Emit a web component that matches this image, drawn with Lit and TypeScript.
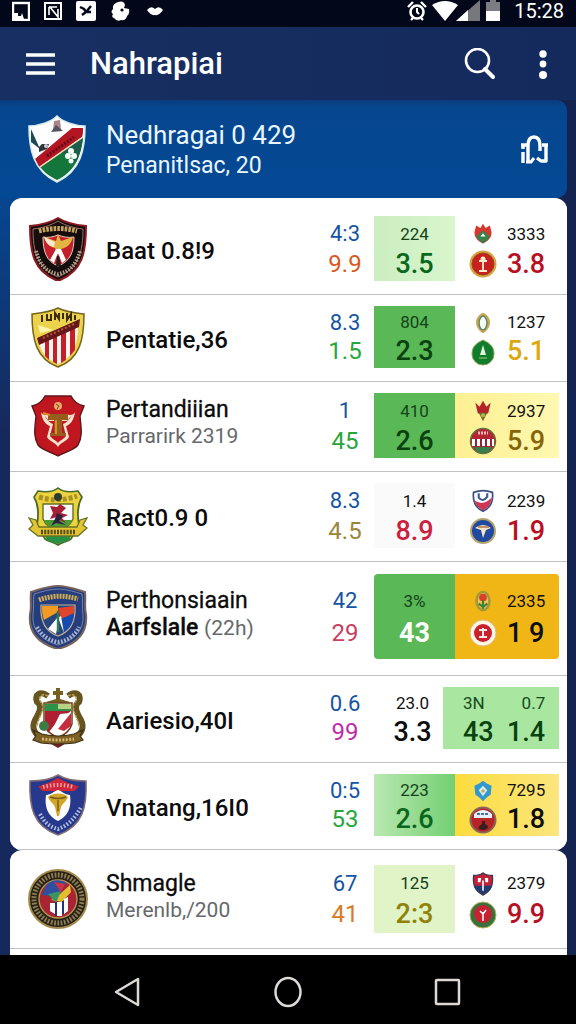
import { LitElement, html, svg, css, nothing, TemplateResult } from "lit";
import { customElement, property } from "lit/decorators.js";
import { classMap } from "lit/directives/class-map.js";

interface Pair {
  top: string;
  bottom: string;
  tone: string;
}

interface Club {
  crest: string;
  name: string;
  second?: string;
  note?: string;
  stacked?: boolean;
  size: "small" | "medium" | "roomy" | "large";
  odds: Pair;
  form: Pair & { fill: string };
  rank: Pair & { fill: string; icons?: [string, string]; wide?: boolean };
}

const crests: Record<string, TemplateResult> = {
  hero: svg`
    <path d="M30 1C24 7 12 11 2 11C2 34 6 56 30 67C54 56 58 34 58 11C48 11 36 7 30 1Z" fill="#fff"/>
    <path d="M4 14L13 34L4 27Z" fill="#1c4a55"/>
    <path d="M45 13L56 13C56 17 56 19 55 22L12 52C10 49 9 47 8 44Z" fill="#b31522"/>
    <path d="M56 23C54 42 47 57 30 65C22 61 17 57 13 52Z" fill="#14763a"/>
    <path d="M56 23C54 34 53 40 49 47L34 37Z" fill="#1e5d4c"/>
    <path d="M13 52L56 22" stroke="#f0dfb8" stroke-width="1.5"/>
    <path d="M20 41L47 22" stroke="#650b17" stroke-width="3" stroke-dasharray="2 1.5"/>
    <path d="M27 6L33 5L34 14L26 15Z" fill="#a9848c"/><path d="M29 10L36 16L24 17Z" fill="#555361"/>
    <path d="M12 32L15 29L22 29L20 34L12 37Z" fill="#2d3535"/><circle cx="19" cy="31" r="2" fill="#ccd"/>
    <g fill="#f4fff7"><circle cx="44" cy="36" r="3"/><circle cx="41" cy="41" r="3"/><circle cx="47" cy="41" r="3"/><circle cx="44" cy="46" r="2.5"/></g>
    <path d="M30 1C24 7 12 11 2 11C2 34 6 56 30 67C54 56 58 34 58 11C48 11 36 7 30 1Z" fill="none" stroke="#d9ebe9" stroke-width="1.6"/>`,
  eagle: svg`
    <path d="M30 1C22 6 12 8 2 9C2 35 5 54 30 64C55 54 58 35 58 9C48 8 38 6 30 1Z" fill="#150c0d" stroke="#8b1b22" stroke-width="2"/>
    <path d="M30 4C22 9 13 11 5 12C5 34 9 51 30 60C51 51 55 34 55 12C47 11 38 9 30 4Z" fill="none" stroke="#c28a79" stroke-width=".8"/>
    <path d="M11 14Q30 9 49 14" fill="none" stroke="#c7a45e" stroke-width="5" stroke-dasharray="2.6 1.1"/>
    <path d="M8 34C12 49 19 55 30 57C41 55 48 49 52 34" fill="none" stroke="#b9a58c" stroke-width="4" stroke-dasharray="1.5 1.5"/>
    <path d="M15 20C20 21 25 20 30 18C35 20 40 21 46 20C46 34 43 44 30 49C18 44 15 34 15 20Z" fill="#c3202b" stroke="#e7cdb6" stroke-width="1"/>
    <path d="M16 20L28 24L30 17L33 24L45 20C43 28 38 31 33 32L30 38L27 31C22 30 18 27 16 20Z" fill="#e2b442"/>
    <path d="M16 20L27 25L26 30C21 29 18 26 16 20Z" fill="#f7e9cf"/>
    <path d="M28 32L22 43L26 46L30 36L34 46L38 43L33 32Z" fill="#fff"/><path d="M29 39L28 49H33L31 39Z" fill="#26191a"/>`,
  stripes: svg`
    <path d="M30 3C23 7 13 8 4 9C4 34 8 54 30 62C52 54 56 34 56 9C47 8 37 7 30 3Z" fill="#ecd34c" stroke="#75631e" stroke-width="1.5"/>
    <path d="M11 37L50 22C50 40 44 53 30 59C18 54 13 47 11 37Z" fill="#fff5ec"/>
    <path d="M17 35L21 33V55L17 51ZM25 32L29 30V59L25 57ZM33 28L38 26V55L33 58ZM42 24L47 22V45L42 51Z" fill="#c51f2c"/>
    <path d="M9 33L52 14L51 22L11 40Z" fill="#641619"/><path d="M15 33L46 19" stroke="#ae5a3d" stroke-width="2" stroke-dasharray="2 2"/>
    <path d="M10 20L25 25L12 28Z" fill="#fbf3ae"/>
    <path d="M14 17V10M19 9V15H23V9M27 15V8L31 14V8M35 8V14M39 8V15L43 9V16M47 10V15" fill="none" stroke="#3b2c0b" stroke-width="2"/>`,
  trophy: svg`
    <path d="M17 2H43C46 8 51 11 56 12L52 22C53 34 55 42 50 51C45 57 36 58 30 62C24 58 15 57 10 51C5 42 7 34 8 22L4 12C9 11 14 8 17 2Z" fill="#c0161f" stroke="#5d171b" stroke-width="1.4"/>
    <circle cx="30" cy="12" r="4" fill="#e5ad64"/><path d="M28 10L31 12L29 15" fill="none" stroke="#933" stroke-width="1"/>
    <path d="M13 18C14 21 18 22 22 20H38C42 22 46 21 47 18C46 26 42 31 38 32L41 43C38 48 33 48 30 53C27 48 22 48 19 43L22 32C18 31 14 26 13 18Z" fill="#fbe3cd"/>
    <path d="M16 21C19 26 22 29 25 30L22 42C25 46 28 46 30 49C32 46 35 46 38 42L35 30C38 29 41 26 44 21L39 27H21Z" fill="#c0161f"/>
    <path d="M20 20H40V26H34V39H38V42H22V39H26V26H20Z" fill="#965e1d"/>
    <path d="M15 19L22 21M28 26V40" stroke="#dd8d2c" stroke-width="2"/>`,
  ribbon: svg`
    <path d="M30 4C24 9 16 8 10 7L6 13C12 23 10 35 9 42L17 55C21 58 26 58 30 61C34 58 39 58 43 55L51 42C50 35 48 23 54 13L50 7C44 8 36 9 30 4Z" fill="#ecd33e" stroke="#466a27" stroke-width="1.6"/>
    <path d="M16 50H44L41 56C37 58 33 58 30 60C27 58 23 58 19 56Z" fill="#279044"/>
    <path d="M15 20H45V35C42 42 37 44 30 47C23 44 18 42 15 35Z" fill="#f8faff" stroke="#66711f" stroke-width="1.4"/>
    <path d="M16 36L44 36C42 42 36 44 30 46C24 44 18 42 16 36Z" fill="#4d9a38"/>
    <path d="M22 22L29 23L32 20L38 24L33 29L40 31L34 34L38 39L32 36L26 40L29 33L22 35L25 29Z" fill="#a51f35"/>
    <path d="M29 29L35 32L31 37L38 41L28 39L23 42L27 35Z" fill="#27233e"/>
    <path d="M11 13Q30 19 49 12" fill="none" stroke="#a79125" stroke-width="5" stroke-dasharray="4 2"/>
    <circle cx="30" cy="13" r="4" fill="#313a31"/>
    <path d="M1 34L8 36L11 43L49 43L52 36L59 34L55 41L59 44L50 52H10L1 45L5 41Z" fill="#e3c534" stroke="#657323" stroke-width="1.3"/>
    <path d="M13 48H47" stroke="#584b16" stroke-width="4.5" stroke-dasharray="2 1.2"/>`,
  sail: svg`
    <path d="M30 1C20 1 10 5 3 7C2 15 4 22 2 29C0 49 12 59 30 64C48 59 60 49 58 29C56 22 58 15 57 7C50 5 40 1 30 1Z" fill="#253d7d" stroke="#76635d" stroke-width="2"/>
    <path d="M30 4C21 4 13 7 6 9C5 16 6 22 5 30C4 46 14 55 30 60C46 55 56 46 55 30C54 22 55 16 54 9C47 7 39 4 30 4Z" fill="none" stroke="#8d95a9" stroke-width=".8"/>
    <path d="M11 15Q30 8 50 14" fill="none" stroke="#cfab51" stroke-width="5" stroke-dasharray="2 1"/>
    <path d="M9 42C14 51 22 56 30 57C39 56 47 51 51 42" fill="none" stroke="#a8b4d2" stroke-width="4" stroke-dasharray="1.8 1.5"/>
    <path d="M13 20H47C48 36 42 47 30 51C18 47 12 36 13 20Z" fill="#27467c" stroke="#c3b494" stroke-width="1.2"/>
    <path d="M14 21H30V27L16 35C14 30 14 25 14 21Z" fill="#f29a21"/><path d="M30 23L46 21V30L33 34Z" fill="#e2432b"/>
    <path d="M33 34L46 28C45 39 41 44 36 47Z" fill="#174bb0"/><path d="M29 33L20 44L28 49L31 35L36 48L33 31Z" fill="#fff"/>
    <path d="M30 26V47" stroke="#317a53" stroke-width="2.4"/>`,
  scroll: svg`
    <path d="M28 2H32V5H35V9H32V13L42 16L38 19H22L18 16L28 13V9H25V5H28Z" fill="#746020"/>
    <path d="M20 10C12 4 6 9 9 16C15 20 11 27 7 34C3 42 7 47 12 52M40 10C48 4 54 9 51 16C45 20 49 27 53 34C57 42 53 47 48 52" fill="none" stroke="#665521" stroke-width="6"/>
    <path d="M20 10C13 6 9 12 14 18C17 24 10 31 9 41M40 10C47 6 51 12 46 18C43 24 50 31 51 41" fill="none" stroke="#b99b4e" stroke-width="1.5" stroke-dasharray="3 1"/>
    <path d="M16 17H44V38C42 45 37 48 30 52C23 48 18 45 16 38Z" fill="#fff" stroke="#6a411e" stroke-width="1.5"/>
    <path d="M17 18H43V25H17Z" fill="#2c9247"/><path d="M30 18H43V23H30Z" fill="#b6d483"/>
    <path d="M17 25H43L30 35L20 47L17 40Z" fill="#ad1f31"/><path d="M43 27V40L36 45L30 43Z" fill="#c62d3e"/>
    <path d="M32 28L42 27L36 35L30 41L22 46L27 38Z" fill="#fff"/><circle cx="16" cy="40" r="5" fill="#3d7c46"/>
    <path d="M18 55L30 62L42 55Z" fill="#6d221f"/>
    <path d="M5 44L14 48Q30 52 46 48L55 44L52 50L55 54L47 57Q30 59 13 57L5 54L8 50Z" fill="#7d6125" stroke="#3e3016" stroke-width="1.2"/>
    <path d="M14 53Q30 55 46 53" fill="none" stroke="#d5b66b" stroke-width="3" stroke-dasharray="2 1.4"/>`,
  cup: svg`
    <path d="M30 2C22 7 12 8 2 8C1 34 5 53 30 62C55 53 59 34 58 8C48 8 38 7 30 2Z" fill="#26398c" stroke="#856d75" stroke-width="1.6"/>
    <path d="M12 14C22 11 26 8 30 6C34 8 38 11 49 14L46 17H15Z" fill="#cf2639" stroke="#cf2639" stroke-width="2"/>
    <path d="M15 14Q30 10 46 14" fill="none" stroke="#eda4aa" stroke-width="4" stroke-dasharray="1.5 2"/>
    <path d="M12 41C17 51 23 54 30 56C39 53 47 46 53 34" fill="none" stroke="#b5bedb" stroke-width="4" stroke-dasharray="1.6 1.8"/>
    <path d="M18 22C23 22 26 18 30 17C34 18 37 22 42 22C44 35 39 44 30 48C21 44 16 35 18 22Z" fill="#fff"/>
    <path d="M20 24C24 20 35 19 40 24C38 29 34 31 33 34L31 43H29L27 34C26 31 22 29 20 24Z" fill="#d1a52a"/>
    <path d="M22 24Q30 27 38 24M30 27V38" fill="none" stroke="#785d18" stroke-width="1.4"/>`,
  seal: svg`
    <circle cx="30" cy="32" r="29" fill="#272015" stroke="#a48b4b" stroke-width="2"/>
    <circle cx="30" cy="32" r="24" fill="none" stroke="#8b7c54" stroke-width="5" stroke-dasharray="1.8 1.5"/>
    <circle cx="30" cy="32" r="19" fill="#aa2533" stroke="#b59351" stroke-width="1.4"/>
    <path d="M18 18C23 12 33 12 38 16L30 30L14 28Z" fill="#304f9e"/><path d="M26 15L37 17L33 25Z" fill="#d23144"/>
    <path d="M42 18L43 25L34 35L23 33L32 27Z" fill="#e2be2e"/><path d="M20 27L33 24L28 36Z" fill="#3a9464"/>
    <path d="M22 36H27V47L22 44ZM29 35H34V49H29ZM36 32L40 30V44L36 47Z" fill="#fff"/><path d="M27 35H29V49H27ZM34 34H36V47H34Z" fill="#223574"/>`,
};

const badges: Record<string, TemplateResult> = {
  flame: svg`<path d="M14 2L17 7L22 4L24 12C24 20 18 23 14 25C10 23 4 20 4 12L6 4L11 7Z" fill="#d7372f"/><path d="M6 17L14 10L22 17Q19 22 14 25Q9 22 6 17Z" fill="#33834a"/><path d="M11 17L14 13L17 17Z" fill="#fff"/>`,
  redcoin: svg`<circle cx="14" cy="14" r="13.5" fill="#d7a33c"/><circle cx="14" cy="14" r="11" fill="#c9201f" stroke="#8c4c1d"/><path d="M14 7V20M10 11H18M10 21H18" stroke="#fff0d2" stroke-width="1.8"/><circle cx="14" cy="9" r="2.5" fill="#fff0d2"/>`,
  leafgold: svg`<path d="M14 2C25 7 25 19 14 26C3 19 3 7 14 2Z" fill="#c9a653"/><ellipse cx="14" cy="14" rx="4.5" ry="8" fill="#f5faf7" stroke="#52816b" stroke-width="1.5"/>`,
  greencoin: svg`<path d="M14 2C20 5 25 8 25 16A11 11 0 0 1 3 16C3 8 8 5 14 2Z" fill="#0f7c2e" stroke="#89a350" stroke-width="1"/><path d="M14 7L17 17H11Z" fill="#e5f5d9"/><path d="M10 20H18" stroke="#71b45c" stroke-width="1.5"/>`,
  crown: svg`<path d="M5 4L10 9L14 2L18 9L23 4L20 17H8Z" fill="#b5232a"/><path d="M9 16H19L14 26Z" fill="#6c6730"/><circle cx="14" cy="19" r="2.5" fill="#a7bb48"/>`,
  bars: svg`<circle cx="14" cy="14" r="12.5" fill="#b52432" stroke="#61703d" stroke-width="1.5"/><path d="M3 12H25V19H3Z" fill="#fff"/><path d="M7 12V20M12 12V20M17 12V20M22 12V19" stroke="#8c2635" stroke-width="2"/><path d="M5 20H23Q20 26 14 26Q8 26 5 20Z" fill="#367f4b"/><path d="M9 6H19" stroke="#f5bab7" stroke-width="3" stroke-dasharray="2 1"/>`,
  shieldswirl: svg`<path d="M3 4Q14 0 25 4Q27 20 14 26Q1 20 3 4Z" fill="#fff" stroke="#3e4d86" stroke-width="2"/><path d="M4 13Q14 21 24 10Q24 20 14 25Q6 21 4 13Z" fill="#cf3654"/><path d="M9 5V10Q14 16 19 9V5" fill="none" stroke="#3b5694" stroke-width="2.4"/>`,
  bluecoin: svg`<circle cx="14" cy="14" r="12" fill="#2149a0" stroke="#b7a46d" stroke-width="2"/><path d="M6 11Q14 5 22 11L17 13L14 21L12 13Z" fill="#f5e7cb"/><path d="M9 10H20" stroke="#ae7447" stroke-width="1.5"/>`,
  flower: svg`<ellipse cx="14" cy="14" rx="9" ry="12" fill="#a3983a"/><ellipse cx="14" cy="14" rx="6" ry="9" fill="#f3c257"/><circle cx="14" cy="10" r="4.5" fill="#d8402a"/><path d="M14 13V23M9 17L14 21L19 17" fill="none" stroke="#3b8136" stroke-width="2.5"/>`,
  whitecoin: svg`<circle cx="14" cy="14" r="13" fill="#fff6e3" stroke="#dfbd86"/><circle cx="14" cy="14" r="9" fill="#c8202c"/><path d="M10 11H18M14 9V18M10 18H18" stroke="#ffe9e3" stroke-width="2"/>`,
  gem: svg`<path d="M14 2L18 5L24 8L23 18L18 22L14 26L10 22L5 18L4 8L10 5Z" fill="#3298cf"/><path d="M14 8L19 13L14 20L9 13Z" fill="#d9f0ed"/><circle cx="14" cy="14" r="2" fill="#c9a64f"/>`,
  roundel: svg`<circle cx="14" cy="14" r="12.5" fill="#b72327" stroke="#8a6658" stroke-width="2"/><path d="M5 8Q14 0 23 8V12H5Z" fill="#e7effd"/><path d="M8 8H20" stroke="#496eae" stroke-width="2" stroke-dasharray="3 1"/><path d="M9 22Q11 19 13 18V15H16V18Q19 19 19 22Q14 26 9 22Z" fill="#36201f"/>`,
  halfshield: svg`<path d="M3 4Q11 4 14 1Q17 4 25 4Q27 21 14 27Q1 21 3 4Z" fill="#be2436" stroke="#343752" stroke-width="1.4"/><path d="M3 16H25Q22 23 14 26Q6 23 3 16Z" fill="#223c70"/><path d="M8 7H12L11 12H8ZM16 7H20V12H17Z" fill="#fff"/><path d="M14 10V22" stroke="#eef" stroke-width="2"/>`,
  greenring: svg`<circle cx="14" cy="14" r="13" fill="#39713c" stroke="#b5b25d" stroke-width="1"/><circle cx="14" cy="13" r="9" fill="#c62332"/><path d="M14 11V20M11 10L14 13L17 9" fill="none" stroke="#fff" stroke-width="1.5"/>`,
};

const clubs: Club[] = [
  {
    crest: "eagle", name: "Baat 0.8!9", size: "medium",
    odds: { top: "4:3", bottom: "9.9", tone: "orange" },
    form: { top: "224", bottom: "3.5", tone: "green", fill: "mint" },
    rank: { top: "3333", bottom: "3.8", tone: "red", fill: "none", icons: ["flame", "redcoin"] },
  },
  {
    crest: "stripes", name: "Pentatie,36", size: "small",
    odds: { top: "8.3", bottom: "1.5", tone: "leaf" },
    form: { top: "804", bottom: "2.3", tone: "forest", fill: "grass" },
    rank: { top: "1237", bottom: "5.1", tone: "gold", fill: "none", icons: ["leafgold", "greencoin"] },
  },
  {
    crest: "trophy", name: "Pertandiiian", note: "Parrarirk 2319", stacked: true, size: "medium",
    odds: { top: "1", bottom: "45", tone: "leaf" },
    form: { top: "410", bottom: "2.6", tone: "forest", fill: "grass" },
    rank: { top: "2937", bottom: "5.9", tone: "olive", fill: "lemon", icons: ["crown", "bars"] },
  },
  {
    crest: "ribbon", name: "Ract0.9 0", size: "medium",
    odds: { top: "8.3", bottom: "4.5", tone: "khaki" },
    form: { top: "1.4", bottom: "8.9", tone: "rose", fill: "mist" },
    rank: { top: "2239", bottom: "1.9", tone: "red", fill: "none", icons: ["shieldswirl", "bluecoin"] },
  },
  {
    crest: "sail", name: "Perthonsiaain", second: "Aarfslale", note: "(22h)", stacked: true, size: "large",
    odds: { top: "42", bottom: "29", tone: "berry" },
    form: { top: "3%", bottom: "43", tone: "white", fill: "grass" },
    rank: { top: "2335", bottom: "1 9", tone: "ink", fill: "amber", icons: ["flower", "whitecoin"] },
  },
  {
    crest: "scroll", name: "Aariesio,40I", size: "small",
    odds: { top: "0.6", bottom: "99", tone: "violet" },
    form: { top: "23.0", bottom: "3.3", tone: "ink", fill: "none" },
    rank: { top: "3N", bottom: "43", tone: "forest", fill: "spring", wide: true },
  },
  {
    crest: "cup", name: "Vnatang,16I0", size: "small",
    odds: { top: "0:5", bottom: "53", tone: "leaf" },
    form: { top: "223", bottom: "2.6", tone: "green", fill: "fade" },
    rank: { top: "7295", bottom: "1.8", tone: "ink", fill: "sun", icons: ["gem", "roundel"] },
  },
];

const others: Club[] = [
  {
    crest: "seal", name: "Shmagle", note: "Merenlb,/200", stacked: true, size: "roomy",
    odds: { top: "67", bottom: "41", tone: "tangerine" },
    form: { top: "125", bottom: "2:3", tone: "moss", fill: "lime" },
    rank: { top: "2379", bottom: "9.9", tone: "red", fill: "none", icons: ["halfshield", "greenring"] },
  },
];

@customElement("status-bar")
class StatusBar extends LitElement {
  static styles = css`
    :host { display: flex; justify-content: space-between; align-items: center; height: 27px; padding: 0 12px; box-sizing: border-box; background: #02081a; color: #fff; }
    .group { display: flex; align-items: center; gap: 14px; height: 22px; align-self: flex-start; }
    .right { gap: 4px; }
    svg { display: block; }
    .time { font-size: 20px; line-height: 24px; margin-left: 8px; }
  `;
  render() {
    return html`
      <div class="group">
        <svg width="18" height="20" viewBox="0 0 18 20"><rect x="1" y="2" width="16" height="17" fill="none" stroke="#fff" stroke-width="2.4"/><path d="M2 12H6V15H9L10 12L12 18H2Z" fill="#fff"/></svg>
        <svg width="18" height="20" viewBox="0 0 18 20"><rect x="1" y="2" width="16" height="16" fill="none" stroke="#fff" stroke-width="2"/><path d="M5 6H13M5 6V14M6 6L14 16V8" fill="none" stroke="#fff" stroke-width="1.6"/></svg>
        <svg width="20" height="20" viewBox="0 0 20 20"><rect width="20" height="20" rx="2" fill="#fff"/><path d="M4 6L8 8L10 11M15 5L10 11L6 14M11 11H15" fill="none" stroke="#02081a" stroke-width="2.4"/></svg>
        <svg width="20" height="22" viewBox="0 0 20 22"><path d="M8 2Q14 0 15 5L14 8L19 9Q20 14 17 16Q16 21 11 20Q7 22 4 18Q1 17 3 14Q0 12 3 9Q2 4 8 2Z" fill="#fff"/><circle cx="12" cy="10" r="1.6" fill="#02081a"/></svg>
        <svg width="22" height="20" viewBox="0 0 22 20"><path d="M3 9Q7 4 11 8Q15 4 19 9Q15 15 11 14Q7 15 3 9Z" fill="#fff"/></svg>
      </div>
      <div class="group right">
        <svg width="22" height="22" viewBox="0 0 22 22" fill="none" stroke="#fff"><circle cx="11" cy="12" r="6.5" stroke-width="2.6"/><path d="M2 7L7 2M20 7L15 2M5 20L7 18M17 20L15 18" stroke-width="2.4"/><path d="M11 8V12L13 14" stroke-width="2"/></svg>
        <svg width="48" height="22" viewBox="0 0 48 22"><path d="M0 5Q13 -3 26 5L13 21Z" fill="#fff"/><path d="M24 21L48 0V21Z" fill="#77787c"/><path d="M24 21L36 10V21Z" fill="#fff"/></svg>
        <svg width="18" height="22" viewBox="0 0 18 22"><path d="M6 0H12V2H16V11H2V2H6Z" fill="#7b7d82"/><path d="M2 11H16V21H2Z" fill="#fff"/></svg>
        <span class="time">15:28</span>
      </div>`;
  }
}

@customElement("club-row")
class ClubRow extends LitElement {
  @property({ attribute: false }) club!: Club;

  static styles = css`
    :host { display: block; }
    .row { display: grid; grid-template-columns: 60px minmax(0, 1fr) 58px 81px 104px; align-items: center; padding: 11px 8px 13px 18px; border-bottom: 1px solid #bfc1c4; background: #fff; }
    .row.wide { grid-template-columns: 60px minmax(0, 1fr) 58px 69px 116px; }
    .row.large { padding-top: 12px; padding-bottom: 16px; }
    .row.roomy { padding-bottom: 15px; }
    .crest { display: block; width: 60px; height: 64px; margin: -2px 0; }
    .title { padding: 6px 0 0 18px; font-size: 24px; line-height: 27px; font-weight: 500; color: #0c0c0c; white-space: nowrap; }
    .title.stacked { font-size: 23px; padding-top: 0; padding-bottom: 5px; font-weight: 400; -webkit-text-stroke: 0.3px #0c0c0c; }
    .line { display: block; }
    .strong { font-weight: 500; }
    .note { font-size: 21px; color: #66686b; -webkit-text-stroke: 0; }
    .cell { display: flex; flex-direction: column; justify-content: center; align-items: center; height: 62px; font-size: 17px; line-height: 29px; color: #111; }
    .medium .cell { height: 65px; line-height: 30px; }
    .roomy .cell { height: 68px; line-height: 31px; }
    .large .cell { height: 85px; line-height: 32px; }
    .cell.odds { font-size: 22px; color: #1554a5; }
    .big { font-size: 27px; font-weight: 500; }
    .odds .big { font-size: 24px; font-weight: 400; }
    .form { color: #14421b; }
    .form.none, .form.mist { color: #111; }
    .wide .form { padding-left: 8px; }
    .rank { display: grid; grid-template-columns: 52px auto; grid-template-rows: auto auto; justify-content: start; align-content: center; align-items: center; justify-items: start; }
    .rank svg { display: block; justify-self: center; margin-left: 4px; }
    .wide .rank { grid-template-columns: 44px auto; padding-left: 20px; box-sizing: border-box; color: #124b1b; }
    .wide .rank .tiny { justify-self: end; }
    .mint { background: linear-gradient(90deg, #cbeec0, #d9f5cd); }
    .grass { background: #5ab956; }
    .mist { background: #fafafa; }
    .fade { background: linear-gradient(90deg, #b9e8b1, #74cf72); }
    .lime { background: #e0f4c8; }
    .lemon { background: linear-gradient(90deg, #fdf091, #fff8b2); }
    .amber { background: #efb615; border-radius: 0 4px 4px 0; }
    .large .form { border-radius: 4px 0 0 4px; }
    .spring { background: #a9e6a0; }
    .sun { background: linear-gradient(90deg, #fbdc3d, #fce67e); }
    .orange { color: #d9591b; }
    .leaf { color: #27a63c; }
    .khaki { color: #9a8639; }
    .berry { color: #c9405f; }
    .violet { color: #bd2ba9; }
    .tangerine { color: #d97a25; }
    .green { color: #08661d; }
    .forest { color: #08420f; }
    .rose { color: #cc1f42; }
    .white { color: #fff; font-weight: 700; }
    .moss { color: #8f8208; }
    .red { color: #b90f22; }
    .gold { color: #dba90f; }
    .olive { color: #86650a; }
    .ink { color: #0c0c0c; }
  `;

  render() {
    const { crest, name, second, note, stacked, size, odds, form, rank } = this.club;
    return html`
      <div class=${classMap({ row: true, [size]: true, wide: !!rank.wide })}>
        <svg class="crest" viewBox="0 0 60 64" aria-hidden="true">${crests[crest]}</svg>
        <div class=${classMap({ title: true, stacked: !!stacked })}>
          <span class="line">${name}</span>
          ${second
            ? html`<span class="line"><span class="strong">${second}</span> <span class="note">${note}</span></span>`
            : note ? html`<span class="line note">${note}</span>` : nothing}
        </div>
        <div class="cell odds"><span>${odds.top}</span><span class="big ${odds.tone}">${odds.bottom}</span></div>
        <div class="cell form ${form.fill}"><span>${form.top}</span><span class="big ${form.tone}">${form.bottom}</span></div>
        ${rank.icons
          ? html`<div class="cell rank ${rank.fill}">
              <svg width="24" height="24" viewBox="0 0 28 28" aria-hidden="true">${badges[rank.icons[0]]}</svg><span>${rank.top}</span>
              <svg width="28" height="28" viewBox="0 0 28 28" aria-hidden="true">${badges[rank.icons[1]]}</svg><span class="big ${rank.tone}">${rank.bottom}</span>
            </div>`
          : html`<div class="cell rank ${rank.fill}">
              <span>${rank.top}</span><span class="tiny">0.7</span>
              <span class="big ${rank.tone}">${rank.bottom}</span><span class="big ${rank.tone}">1.4</span>
            </div>`}
      </div>`;
  }
}

@customElement("app-root")
class AppRoot extends LitElement {
  static styles = css`
    :host { display: flex; flex-direction: column; height: 100vh; font-family: Roboto, "Liberation Sans", sans-serif; background: #14234f; }
    button { display: grid; place-items: center; width: 32px; height: 32px; padding: 0; border: 0; background: none; color: #fff; }
    svg { display: block; }
    .bar { display: flex; align-items: center; flex: none; height: 73px; padding: 0 17px 0 24px; box-sizing: border-box; background: linear-gradient(90deg, #182f63, #142a5c); color: #fff; }
    .bar h1 { flex: 1; margin: 0; padding-left: 34px; font-size: 31px; line-height: 36px; font-weight: 500; }
    .actions { display: flex; gap: 31px; }
    main { flex: 1; min-height: 0; overflow: hidden; display: flex; flex-direction: column; background: linear-gradient(90deg, transparent 50%, #14234f 50%), linear-gradient(180deg, #06468f 100px, #17295c 330px); }
    .hero { display: flex; align-items: center; flex: none; height: 98px; margin-right: 9px; padding: 0 17px 0 27px; box-sizing: border-box; border-radius: 0 10px 10px 0; background: linear-gradient(180deg, #0a3d7e 0, #06468f 8px, #044994 100%); color: #e9f6ff; }
    .hero-text { flex: 1; padding-left: 19px; }
    .hero h2 { margin: 0; font-size: 26px; line-height: 32px; font-weight: 400; }
    .hero p { margin: 0; font-size: 23px; line-height: 29px; }
    ul { list-style: none; margin: 0 9px 0 10px; padding: 0; flex: none; border-radius: 12px; overflow: hidden; background: #fff; }
    .first { padding-top: 7px; }
    .next { flex: 1 0 auto; border-radius: 12px 12px 0 0; padding-top: 4px; }
    nav { display: flex; justify-content: center; gap: 128px; flex: none; padding: 21px 0 16px; background: #000; }
  `;

  render() {
    return html`
      <status-bar></status-bar>
      <header class="bar">
        <button aria-label="Menu"><svg width="32" height="32" viewBox="0 0 32 32"><path d="M2 7H31M2 16H31M2 25H31" stroke="#fff" stroke-width="3.6"/></svg></button>
        <h1>Nahrapiai</h1>
        <div class="actions">
          <button aria-label="Search"><svg width="32" height="32" viewBox="0 0 32 32" fill="none" stroke="#fff"><circle cx="13.5" cy="12.5" r="11.5" stroke-width="2.6"/><path d="M21 21L29 29" stroke-width="4" stroke-linecap="round"/></svg></button>
          <button aria-label="More"><svg width="32" height="32" viewBox="0 0 32 32" fill="#fff"><circle cx="16" cy="6" r="3.7"/><circle cx="16" cy="16" r="3.4"/><circle cx="16" cy="27" r="4"/></svg></button>
        </div>
      </header>
      <main>
        <section class="hero">
          <svg width="60" height="68" viewBox="0 0 60 68" aria-hidden="true">${crests.hero}</svg>
          <div class="hero-text"><h2>Nedhragai 0 429</h2><p>Penanitlsac, 20</p></div>
          <button aria-label="Favourite"><svg width="32" height="32" viewBox="0 0 32 32" fill="none" stroke="#fff" stroke-width="3.4" stroke-linejoin="round"><path d="M3 12H10M5 12V16M5 19V30M24 12H30M28 12V28H23L19 25"/><path d="M10 30V13Q10 4 16 4Q22 4 22 13V18"/><path d="M8 29H13L16 25" stroke-width="3"/></svg></button>
        </section>
        <ul>${clubs.map((club, i) => html`<li class=${i === 0 ? "first" : ""}><club-row .club=${club}></club-row></li>`)}</ul>
        <ul class="next">${others.map((club) => html`<li><club-row .club=${club}></club-row></li>`)}</ul>
      </main>
      <nav>
        <button aria-label="Back"><svg width="32" height="32" viewBox="0 0 32 32"><path d="M4 16L26 3V29Z" fill="none" stroke="#ddd9d5" stroke-width="2.5" stroke-linejoin="round"/></svg></button>
        <button aria-label="Home"><svg width="32" height="32" viewBox="0 0 32 32"><ellipse cx="16" cy="16" rx="12.5" ry="14" fill="none" stroke="#ddd9d5" stroke-width="2.5"/></svg></button>
        <button aria-label="Recent"><svg width="32" height="32" viewBox="0 0 32 32"><rect x="4" y="4" width="23" height="24" rx="1" fill="none" stroke="#ddd9d5" stroke-width="2.5"/></svg></button>
      </nav>`;
  }
}
